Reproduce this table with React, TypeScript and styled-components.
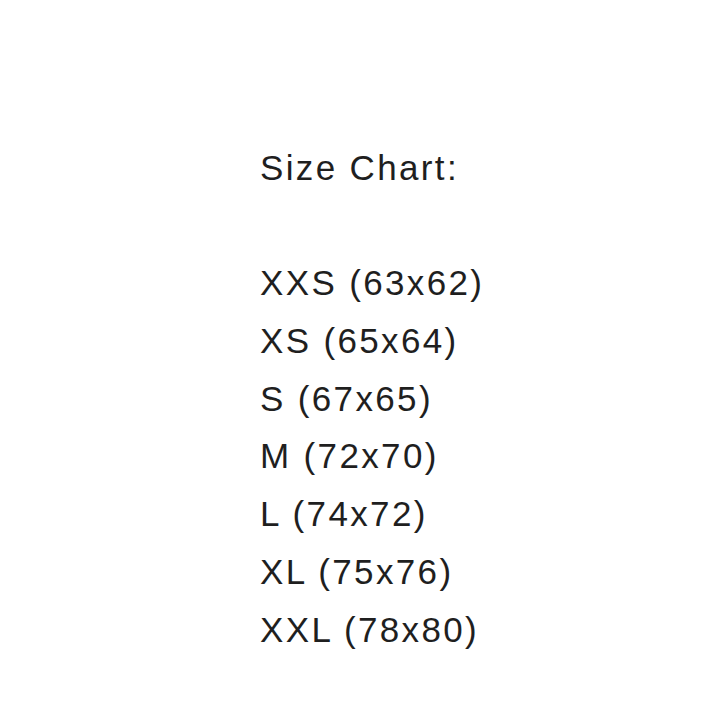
import React from 'react';
import styled, { createGlobalStyle } from 'styled-components';

const GlobalStyle = createGlobalStyle`
    html, body {
        margin: 0;
        padding: 0;
        background: #ffffff;
    }
`;

const Page = styled.div`
    width: 726px;
    height: 726px;
    box-sizing: border-box;
    padding: 139px 0 0 260px;
    background: #ffffff;
`;

const Line = styled.div<{ $blank?: boolean }>`
    font-family: "Liberation Sans", Arial, sans-serif;
    font-size: 35px;
    line-height: 57.7px;
    height: 57.7px;
    letter-spacing: 2.35px;
    color: #1f1f1f;
    white-space: nowrap;
`;

const sizes = [
    'XXS (63x62)',
    'XS (65x64)',
    'S (67x65)',
    'M (72x70)',
    'L (74x72)',
    'XL (75x76)',
    'XXL (78x80)',
];

export default function App() {
    return (
        <>
            <GlobalStyle />
            <Page>
                <Line>Size Chart:</Line>
                <Line $blank />
                {sizes.map((s) => (
                    <Line key={s}>{s}</Line>
                ))}
            </Page>
        </>
    );
}
